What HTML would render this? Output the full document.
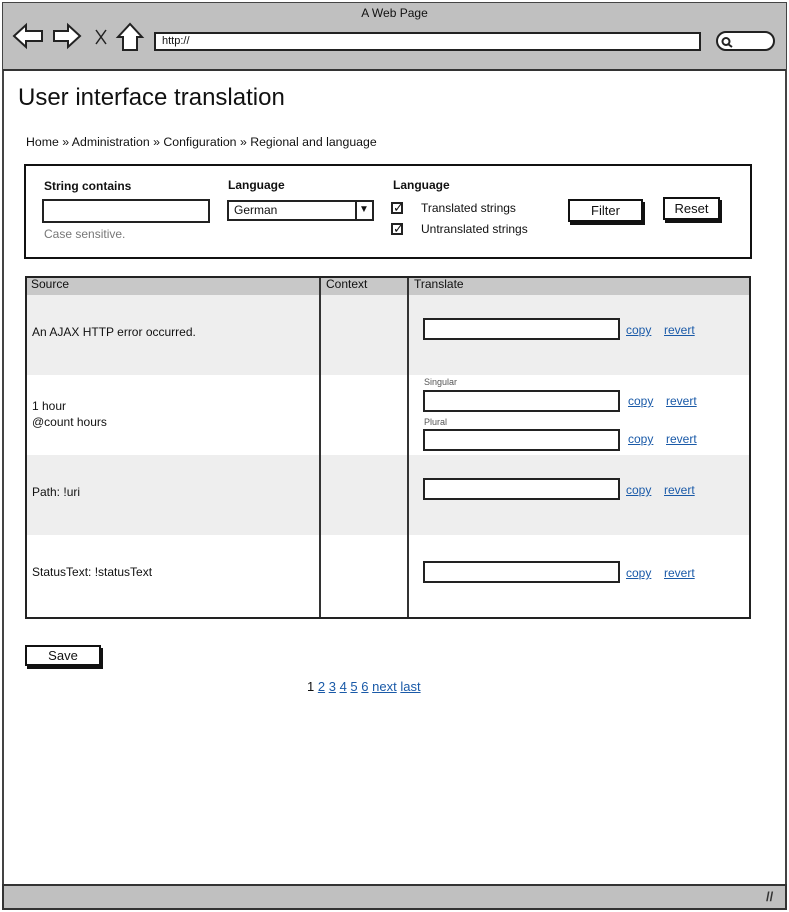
<!DOCTYPE html>
<html><head><meta charset="utf-8"><style>
*{margin:0;padding:0;box-sizing:border-box}
body{width:789px;height:912px;background:#fff;position:relative;overflow:hidden;font-family:"Liberation Sans",sans-serif;color:#111;font-size:12px}
.a{position:absolute;white-space:nowrap}
.in{position:absolute;border:2px solid #222;background:#fff}
.btn{position:absolute;border:2px solid #111;background:#fff;box-shadow:2px 3px 0 #111;text-align:center;font-size:13px}
a,.lk{color:#1a5aa8;text-decoration:underline}
.lbl{font-weight:bold;font-size:12px}
.cb{position:absolute;width:12px;height:12px;border:2px solid #222;font-size:13px;line-height:8px;text-align:center}
</style></head><body>
<div class="a" style="left:2px;top:2px;width:785px;height:908px;border:2px solid #444"></div>
<div class="a" style="left:3px;top:3px;width:783px;height:68px;background:#c0c0c0;border-bottom:2px solid #333"></div>
<div class="a" style="left:0;width:789px;top:6px;text-align:center;font-size:12px">A Web Page</div>
<svg class="a" style="left:12px;top:22px" width="135" height="30" viewBox="0 0 135 30">
<path d="M2 14 L14 3 L14 9 L30 9 L30 19 L14 19 L14 25 Z" fill="#fff" stroke="#222" stroke-width="2"/>
<path d="M68 14 L56 3 L56 9 L42 9 L42 19 L56 19 L56 25 Z" fill="#fff" stroke="#222" stroke-width="2"/>
<path d="M84 8 L94 22 M94 8 L84 22" stroke="#222" stroke-width="1.5"/>
<path d="M118 2 L106 15 L111 15 L111 28 L125 28 L125 15 L130 15 Z" fill="#fff" stroke="#222" stroke-width="2"/>
</svg>
<div class="in" style="left:154px;top:32px;width:547px;height:19px;font-size:11px;padding-left:6px;line-height:14px">http://</div>
<div class="in" style="left:716px;top:31px;width:59px;height:20px;border-radius:10px"></div>
<svg class="a" style="left:720px;top:36px" width="14" height="12"><circle cx="6" cy="5.5" r="3.5" fill="none" stroke="#222" stroke-width="2"/><path d="M8 8 L12 11" stroke="#222" stroke-width="2"/></svg>
<div class="a" style="left:18px;top:84px;font-size:24px">User interface translation</div>
<div class="a" style="left:26px;top:135px;font-size:12.3px">Home » Administration » Configuration » Regional and language</div>
<div class="a" style="left:24px;top:164px;width:728px;height:95px;border:2px solid #111"></div>
<div class="a lbl" style="left:44px;top:179px">String contains</div>
<div class="a lbl" style="left:228px;top:178px">Language</div>
<div class="a lbl" style="left:393px;top:178px">Language</div>
<div class="in" style="left:42px;top:199px;width:168px;height:24px"></div>
<div class="a" style="left:44px;top:227px;color:#777;font-size:12px">Case sensitive.</div>
<div class="in" style="left:227px;top:200px;width:147px;height:21px;font-size:12px;padding-left:5px;line-height:17px">German</div>
<div class="a" style="left:355px;top:201px;width:2px;height:19px;background:#222"></div>
<div class="a" style="left:359px;top:204px;font-size:10px">▼</div>
<div class="cb" style="left:391px;top:202px">✓</div>
<div class="cb" style="left:391px;top:223px">✓</div>
<div class="a" style="left:421px;top:201px">Translated strings</div>
<div class="a" style="left:421px;top:222px">Untranslated strings</div>
<div class="btn" style="left:568px;top:199px;width:75px;height:23px;line-height:19px">Filter</div>
<div class="btn" style="left:663px;top:197px;width:57px;height:23px;line-height:19px">Reset</div>
<div class="a" style="left:25px;top:276px;width:726px;height:343px;border:2px solid #222"></div>
<div class="a" style="left:27px;top:278px;width:722px;height:17px;background:#c8c8c8"></div>
<div class="a" style="left:27px;top:295px;width:722px;height:80px;background:#eee"></div>
<div class="a" style="left:27px;top:455px;width:722px;height:80px;background:#eee"></div>
<div class="a" style="left:319px;top:278px;width:2px;height:339px;background:#333"></div>
<div class="a" style="left:407px;top:278px;width:2px;height:339px;background:#333"></div>
<div class="a" style="left:31px;top:277px">Source</div>
<div class="a" style="left:326px;top:277px">Context</div>
<div class="a" style="left:414px;top:277px">Translate</div>
<div class="a" style="left:32px;top:325px">An AJAX HTTP error occurred.</div>
<div class="in" style="left:423px;top:318px;width:197px;height:22px"></div>
<div class="a lk" style="left:626px;top:323px">copy</div><div class="a lk" style="left:664px;top:323px">revert</div>
<div class="a" style="left:32px;top:399px">1 hour</div>
<div class="a" style="left:32px;top:415px">@count hours</div>
<div class="a" style="left:424px;top:377px;font-size:9px;color:#555">Singular</div>
<div class="in" style="left:423px;top:390px;width:197px;height:22px"></div>
<div class="a lk" style="left:628px;top:394px">copy</div><div class="a lk" style="left:666px;top:394px">revert</div>
<div class="a" style="left:424px;top:417px;font-size:9px;color:#555">Plural</div>
<div class="in" style="left:423px;top:429px;width:197px;height:22px"></div>
<div class="a lk" style="left:628px;top:432px">copy</div><div class="a lk" style="left:666px;top:432px">revert</div>
<div class="a" style="left:32px;top:485px">Path: !uri</div>
<div class="in" style="left:423px;top:478px;width:197px;height:22px"></div>
<div class="a lk" style="left:626px;top:483px">copy</div><div class="a lk" style="left:664px;top:483px">revert</div>
<div class="a" style="left:32px;top:565px">StatusText: !statusText</div>
<div class="in" style="left:423px;top:561px;width:197px;height:22px"></div>
<div class="a lk" style="left:626px;top:566px">copy</div><div class="a lk" style="left:664px;top:566px">revert</div>
<div class="btn" style="left:25px;top:645px;width:76px;height:21px;line-height:17px">Save</div>
<div class="a" style="left:307px;top:679px;font-size:13px">1 <span class="lk">2</span> <span class="lk">3</span> <span class="lk">4</span> <span class="lk">5</span> <span class="lk">6</span> <span class="lk">next</span> <span class="lk">last</span></div>
<div class="a" style="left:2px;top:884px;width:785px;height:26px;background:#c0c0c0;border:2px solid #333"></div>
<div class="a" style="left:766px;top:889px;font-size:13px;font-weight:bold;color:#333">//</div>
</body></html>
